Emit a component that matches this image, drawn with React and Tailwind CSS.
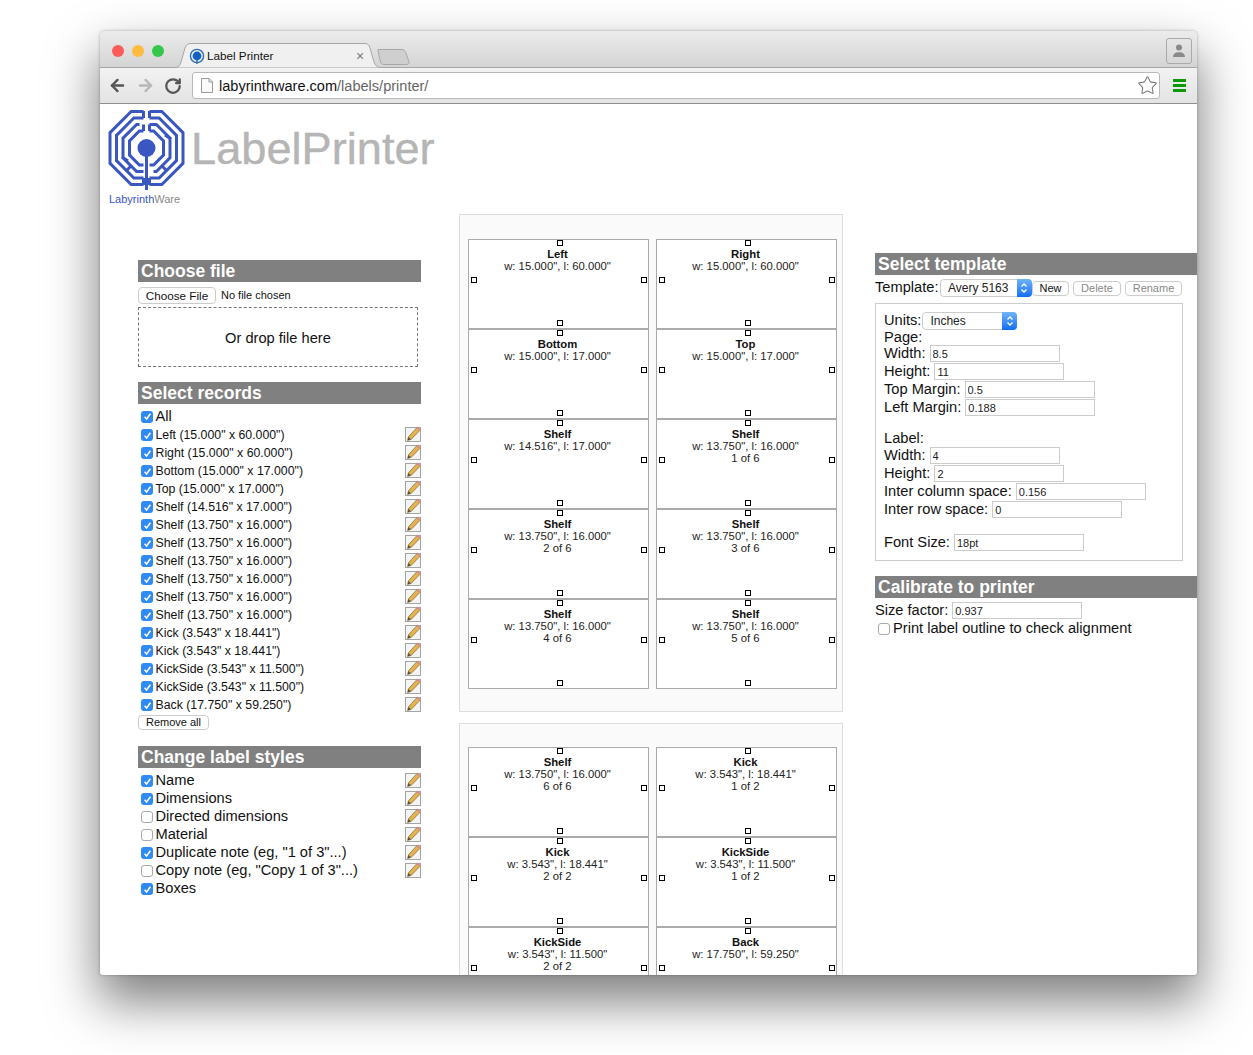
import React from 'react';
import { ArrowLeft, ArrowRight, RotateCw, Star } from 'lucide-react';

const RECORDS = [
  'Left (15.000" x 60.000")',
  'Right (15.000" x 60.000")',
  'Bottom (15.000" x 17.000")',
  'Top (15.000" x 17.000")',
  'Shelf (14.516" x 17.000")',
  'Shelf (13.750" x 16.000")',
  'Shelf (13.750" x 16.000")',
  'Shelf (13.750" x 16.000")',
  'Shelf (13.750" x 16.000")',
  'Shelf (13.750" x 16.000")',
  'Shelf (13.750" x 16.000")',
  'Kick (3.543" x 18.441")',
  'Kick (3.543" x 18.441")',
  'KickSide (3.543" x 11.500")',
  'KickSide (3.543" x 11.500")',
  'Back (17.750" x 59.250")',
];

const STYLES = [
  { name: 'Name', on: true, edit: true },
  { name: 'Dimensions', on: true, edit: true },
  { name: 'Directed dimensions', on: false, edit: true },
  { name: 'Material', on: false, edit: true },
  { name: 'Duplicate note (eg, "1 of 3"...)', on: true, edit: true },
  { name: 'Copy note (eg, "Copy 1 of 3"...)', on: false, edit: true },
  { name: 'Boxes', on: true, edit: false },
];

const SHEET_ONE = [
  ['Left', 'w: 15.000", l: 60.000"'],
  ['Right', 'w: 15.000", l: 60.000"'],
  ['Bottom', 'w: 15.000", l: 17.000"'],
  ['Top', 'w: 15.000", l: 17.000"'],
  ['Shelf', 'w: 14.516", l: 17.000"'],
  ['Shelf', 'w: 13.750", l: 16.000"', '1 of 6'],
  ['Shelf', 'w: 13.750", l: 16.000"', '2 of 6'],
  ['Shelf', 'w: 13.750", l: 16.000"', '3 of 6'],
  ['Shelf', 'w: 13.750", l: 16.000"', '4 of 6'],
  ['Shelf', 'w: 13.750", l: 16.000"', '5 of 6'],
];

const SHEET_TWO = [
  ['Shelf', 'w: 13.750", l: 16.000"', '6 of 6'],
  ['Kick', 'w: 3.543", l: 18.441"', '1 of 2'],
  ['Kick', 'w: 3.543", l: 18.441"', '2 of 2'],
  ['KickSide', 'w: 3.543", l: 11.500"', '1 of 2'],
  ['KickSide', 'w: 3.543", l: 11.500"', '2 of 2'],
  ['Back', 'w: 17.750", l: 59.250"'],
];

// Half an octagon ring, mirrored by side (-1 left, 1 right)
const octSide = (R, side, top, bottom) => {
  const c = R * 0.42;
  const x = (v) => 38.5 + side * v;
  return `M${x(top)} ${39 - R}L${x(c)} ${39 - R}L${x(R)} ${39 - c}L${x(R)} ${39 + c}L${x(c)} ${39 + R}L${x(bottom)} ${39 + R}`;
};

const Logo = () => (
  <svg width="78" height="82" viewBox="0 0 78 82" fill="none" stroke="#3a56c0" strokeWidth="3">
    <path d={octSide(36.5, -1, 3, 3)} />
    <path d={octSide(36.5, 1, 3, 3)} />
    <path d={octSide(30, -1, 3, 3)} />
    <path d={octSide(30, 1, 3, 3)} />
    <path d="M35.500 2V9M41.500 2V9M35.500 69V76M41.500 69V76" />
    <path d={octSide(23.5, -1, 7, 3)} />
    <path d={octSide(23.5, 1, 3, 7)} />
    <path d={octSide(17, -1, 3, 3)} />
    <path d={octSide(17, 1, 3, 3)} />
    <path d="M35.500 15.500V22M41.500 15.500V22M14 48L20 52M63 30L57 26M18 62L23 57M59 62L54 57" />
    <path d="M38.500 42V81" />
    <circle cx="38.500" cy="39" r="9" fill="#3a56c0" stroke="none" />
  </svg>
);

const Favicon = () => (
  <svg width="16" height="16" viewBox="0 0 16 16" fill="none">
    <circle cx="8" cy="8" r="6.6" stroke="#2f6fb5" strokeWidth="1.4" />
    <circle cx="8" cy="8" r="4.4" fill="#1560c8" />
    <path d="M8 12V16" stroke="#2f6fb5" strokeWidth="1.4" />
  </svg>
);

const Pencil = () => (
  <svg width="16" height="16" viewBox="0 0 16 16" className="-mt-[2px] shrink-0">
    <rect x="0.5" y="1.500" width="15" height="14" fill="#f4f4f4" stroke="#a4a4a4" />
    <path d="M12 1.500L15 4.200L6.200 13.400L2.600 14.400L3.600 10.600Z" fill="#e5b24b" stroke="#7a6a3c" strokeWidth="0.7" />
    <path d="M12.600 0.600L16 3.500L14.800 4.800L11.400 2Z" fill="#d98b8b" />
    <path d="M3.600 11L5.800 13.200L2.600 14.400Z" fill="#554a36" />
  </svg>
);

const Check = ({ on }) =>
  on ? (
    <span className="flex h-3 w-3 shrink-0 items-center justify-center rounded-[3px] bg-[#2f8bf3]">
      <svg width="9" height="9" viewBox="0 0 9 9" fill="none">
        <path d="M1.600 4.800L3.600 7L7.400 1.800" stroke="#fff" strokeWidth="1.5" />
      </svg>
    </span>
  ) : (
    <span className="h-3 w-3 shrink-0 rounded-[3px] border border-[#aaa] bg-white" />
  );

const SectionHead = ({ children }) => (
  <div className="h-[22px] bg-[#808080] pl-[3px] text-[17.5px] leading-[22px] font-bold text-white">{children}</div>
);

const PageButton = ({ children, className = 'h-[15px] text-[11px]', muted }) => (
  <span
    className={`flex items-center justify-center rounded-[4px] border border-[#ccc] bg-white ${muted ? 'text-[#888]' : 'text-[#111]'} ${className}`}
  >
    {children}
  </span>
);

const FakeSelect = ({ value, className = '' }) => (
  <span className={`flex h-[18px] items-center rounded-[4px] border border-[#ccc] bg-white pl-[7px] text-[12px] text-[#222] ${className}`}>
    <span className="flex-1">{value}</span>
    <span className="-mr-px flex h-[18px] w-[15px] items-center justify-center rounded-r-[4px] bg-gradient-to-b from-[#6fb4fb] to-[#0f6cf0]">
      <svg width="8" height="12" viewBox="0 0 8 12" fill="none" stroke="#fff" strokeWidth="1.3">
        <path d="M1.500 4.500L4 2L6.500 4.500M1.500 7.500L4 10L6.500 7.500" />
      </svg>
    </span>
  </span>
);

const Field = ({ label, value, className = '' }) => (
  <div className={`flex h-[18px] items-start gap-1 leading-[16px] ${className}`}>
    <span>{label}</span>
    <input
      readOnly
      value={value}
      className="h-[17px] w-[130px] border border-[#ccc] bg-white px-[2px] text-[11px] text-[#222] outline-none"
    />
  </div>
);

const Handle = ({ className }) => (
  <span className={`absolute h-[6px] w-[6px] border border-black bg-white ${className}`} />
);

const Label = ({ name, size, note }) => (
  <div className="relative h-[90px] w-[181px] border border-[#aaa] bg-white pt-[8px] pr-[2px] text-center text-[11.3px] leading-[12px] text-[#222]">
    <Handle className="top-0 left-[88px]" />
    <Handle className="top-[37px] left-[2px]" />
    <Handle className="top-[37px] right-[1px]" />
    <Handle className="bottom-[2px] left-[88px]" />
    <div className="font-bold text-[#111]">{name}</div>
    <div>{size}</div>
    {note && <div>{note}</div>}
  </div>
);

const Sheet = ({ labels, className = '' }) => (
  <div className={`border border-[#ddd] bg-[#fafafa] pl-2 ${className}`}>
    <div className="grid grid-cols-[181px_181px] gap-x-[7px]">
      {labels.map((label, i) => (
        <Label key={i} name={label[0]} size={label[1]} note={label[2]} />
      ))}
    </div>
  </div>
);

const TitleBar = () => (
  <div className="relative flex h-[37px] rounded-t-[5px] border-b border-[#a6a6a6] bg-gradient-to-b from-[#ececec] to-[#d4d4d4] pl-3">
    <div className="mt-[14px] flex gap-2">
      <span className="h-3 w-3 rounded-full bg-[#fc5b57]" />
      <span className="h-3 w-3 rounded-full bg-[#fdbc40]" />
      <span className="h-3 w-3 rounded-full bg-[#34c84a]" />
    </div>
    <div className="relative z-10 mt-3 ml-3 flex h-[25px] w-[204px] items-center pt-px pl-[13px] text-[11.7px] text-[#111]">
      <svg className="absolute top-0 left-0" width="204" height="25" viewBox="0 0 204 25">
        <path
          d="M0 24.500C3 24.500 4 22 5 19L9 5C10 2 12 .5 15 .5H189C192 .5 193 2 194 5L198 19C199 22 201 24.500 204 24.500"
          fill="#f0f0f0"
          stroke="#a6a6a6"
        />
      </svg>
      <span className="relative mr-[2px]">
        <Favicon />
      </span>
      <span className="relative">Label Printer</span>
      <span className="absolute top-[3px] left-[180px] text-[14px] text-[#777]">×</span>
    </div>
    <svg className="mt-[17px] -ml-[3px]" width="33" height="18" viewBox="0 0 33 18">
      <path
        d="M1 1.500H25C27 1.500 28 2.500 29 5L32 14C32.500 16 31 16.500 29 16.500H7C5 16.500 4 15.500 3.500 14L1 3C.8 2 .8 1.500 1 1.500Z"
        fill="#cfcfcf"
        stroke="#a8a8a8"
      />
    </svg>
    <span className="mt-[7px] mr-[5px] ml-auto flex h-[26px] w-[26px] items-center justify-center rounded-[3px] border border-[#aaa]">
      <svg width="14" height="14" viewBox="0 0 14 14" fill="#8a8a8a">
        <circle cx="7" cy="3.500" r="3" />
        <path d="M1 13C1 10 3 9 5.500 8.300H8.500C11 9 13 10 13 13Z" />
      </svg>
    </span>
  </div>
);

const Toolbar = () => (
  <div className="flex h-9 items-center border-b border-[#8f8f8f] bg-gradient-to-b from-[#f2f2f2] to-[#e3e3e3] pl-[8px]">
    <ArrowLeft size={19} strokeWidth={3} className="text-[#555]" />
    <ArrowRight size={19} strokeWidth={3} className="ml-[9px] text-[#b8b8b8]" />
    <RotateCw size={18} strokeWidth={3} className="ml-[9px] text-[#555]" />
    <div className="ml-[10px] flex h-[27px] w-[968px] items-center rounded-[3px] border border-[#b9b9b9] bg-white pr-[1px] pl-[8px] text-[14.55px]">
      <svg width="12" height="15" viewBox="0 0 12 15" fill="#fafafa" stroke="#999">
        <path d="M.5 .5H8L11.500 4V14.500H.5ZM8 .5V4H11.500" />
      </svg>
      <span className="mt-[2px] ml-[6px] text-[#111]">labyrinthware.com</span>
      <span className="mt-[2px] text-[#666]">/labels/printer/</span>
      <Star size={21} strokeWidth={1.2} className="ml-auto text-[#777]" />
    </div>
    <span className="ml-[13px] flex w-[13px] flex-col gap-[2px]">
      <span className="h-[3px] bg-[#0a9a0a]" />
      <span className="h-[3px] bg-[#0a9a0a]" />
      <span className="h-[3px] bg-[#0a9a0a]" />
    </span>
  </div>
);

const LeftColumn = () => (
  <div className="mt-[46px] ml-[38px] w-[283px] shrink-0">
    <SectionHead>Choose file</SectionHead>
    <div className="mt-[5px] flex items-center text-[11px]">
      <PageButton className="h-[17px] w-[78px] text-[11.7px]">Choose File</PageButton>
      <span className="ml-[5px] text-[#111]">No file chosen</span>
    </div>
    <div className="mt-[3px] flex h-[60px] w-[280px] items-center justify-center border border-dashed border-[#777] pt-[3px] text-[14.65px]">
      Or drop file here
    </div>

    <div className="mt-[15px]">
      <SectionHead>Select records</SectionHead>
    </div>
    <div className="mt-[3px] flex h-[19px] items-center gap-[2.5px] pl-[3px] text-[14.65px]">
      <Check on />
      All
    </div>
    {RECORDS.map((record, i) => (
      <div key={i} className="flex h-[18px] items-center gap-[2.5px] pl-[3px] text-[12.3px]">
        <Check on />
        <span className="flex-1">{record}</span>
        <Pencil />
      </div>
    ))}
    <PageButton className="mt-px h-[15px] w-[71px] text-[11px]">Remove all</PageButton>

    <div className="mt-[16px]">
      <SectionHead>Change label styles</SectionHead>
    </div>
    <div className="mt-[4px]">
      {STYLES.map((style) => (
        <div key={style.name} className="flex h-[18px] items-center gap-[2.5px] pl-[3px] text-[14.65px]">
          <Check on={style.on} />
          <span className="flex-1">{style.name}</span>
          {style.edit && <Pencil />}
        </div>
      ))}
    </div>
  </div>
);

const RightColumn = () => (
  <div className="mt-[39px] ml-[32px] w-[322px] shrink-0 text-[14.65px] text-[#111]">
    <SectionHead>Select template</SectionHead>
    <div className="mt-[4px] flex h-[18px] items-center">
      <span>Template:</span>
      <FakeSelect value="Avery 5163" className="ml-[1.5px] w-[92px]" />
      <PageButton className="h-[15px] w-[37px] text-[11px]">New</PageButton>
      <PageButton muted className="ml-[4px] h-[15px] w-[48px] text-[11px]">
        Delete
      </PageButton>
      <PageButton muted className="ml-[4px] h-[15px] w-[57px] text-[11px]">
        Rename
      </PageButton>
    </div>
    <div className="mt-[6px] w-[308px] border border-[#ccc] pt-[8px] pb-[8px] pl-2">
      <div className="flex h-[17px] items-center gap-px">
        <span>Units:</span>
        <FakeSelect value="Inches" className="w-[95px]" />
      </div>
      <div className="h-[16px] leading-[16px]">Page:</div>
      <Field label="Width:" value="8.5" />
      <Field label="Height:" value="11" />
      <Field label="Top Margin:" value="0.5" />
      <Field label="Left Margin:" value="0.188" />
      <div className="mt-[13px] h-[17px] leading-[17px]">Label:</div>
      <Field label="Width:" value="4" />
      <Field label="Height:" value="2" />
      <Field label="Inter column space:" value="0.156" />
      <Field label="Inter row space:" value="0" />
      <Field label="Font Size:" value="18pt" className="mt-[15px]" />
    </div>
    <div className="mt-[15px]">
      <SectionHead>Calibrate to printer</SectionHead>
    </div>
    <Field label="Size factor:" value="0.937" className="mt-[4px]" />
    <div className="flex h-[18px] items-center gap-[3px] pl-[3px]">
      <Check on={false} />
      Print label outline to check alignment
    </div>
  </div>
);

export default function App() {
  return (
    <div className="h-[1055px] overflow-hidden bg-white pt-[31px] pl-[100px] font-['Liberation_Sans',Arial,sans-serif] text-[#111]">
      <div className="h-[944px] w-[1097px] overflow-hidden rounded-t-[5px] rounded-b-[3px] bg-white shadow-[0_25px_50px_2px_rgba(0,0,0,0.5),0_0_3px_rgba(0,0,0,0.3)]">
        <TitleBar />
        <Toolbar />
        <div className="flex h-[110px] pt-[5px] pl-2">
          <div className="w-[83px]">
            <Logo />
            <div className="mt-[1px] ml-px text-[11px] leading-[14px] text-[#888]">
              <span className="text-[#3a56c0]">Labyrinth</span>Ware
            </div>
          </div>
          <div className="mt-[14px] text-[45.2px] leading-[52px] text-[#b5b5b5] [-webkit-text-stroke:0.4px_#b5b5b5]">LabelPrinter</div>
        </div>
        <div className="flex">
          <LeftColumn />
          <div className="ml-[38px] w-[384px] shrink-0">
            <Sheet labels={SHEET_ONE} className="h-[498px] pt-6" />
            <Sheet labels={SHEET_TWO} className="mt-[11px] h-[300px] pt-[23px]" />
          </div>
          <RightColumn />
        </div>
      </div>
    </div>
  );
}
